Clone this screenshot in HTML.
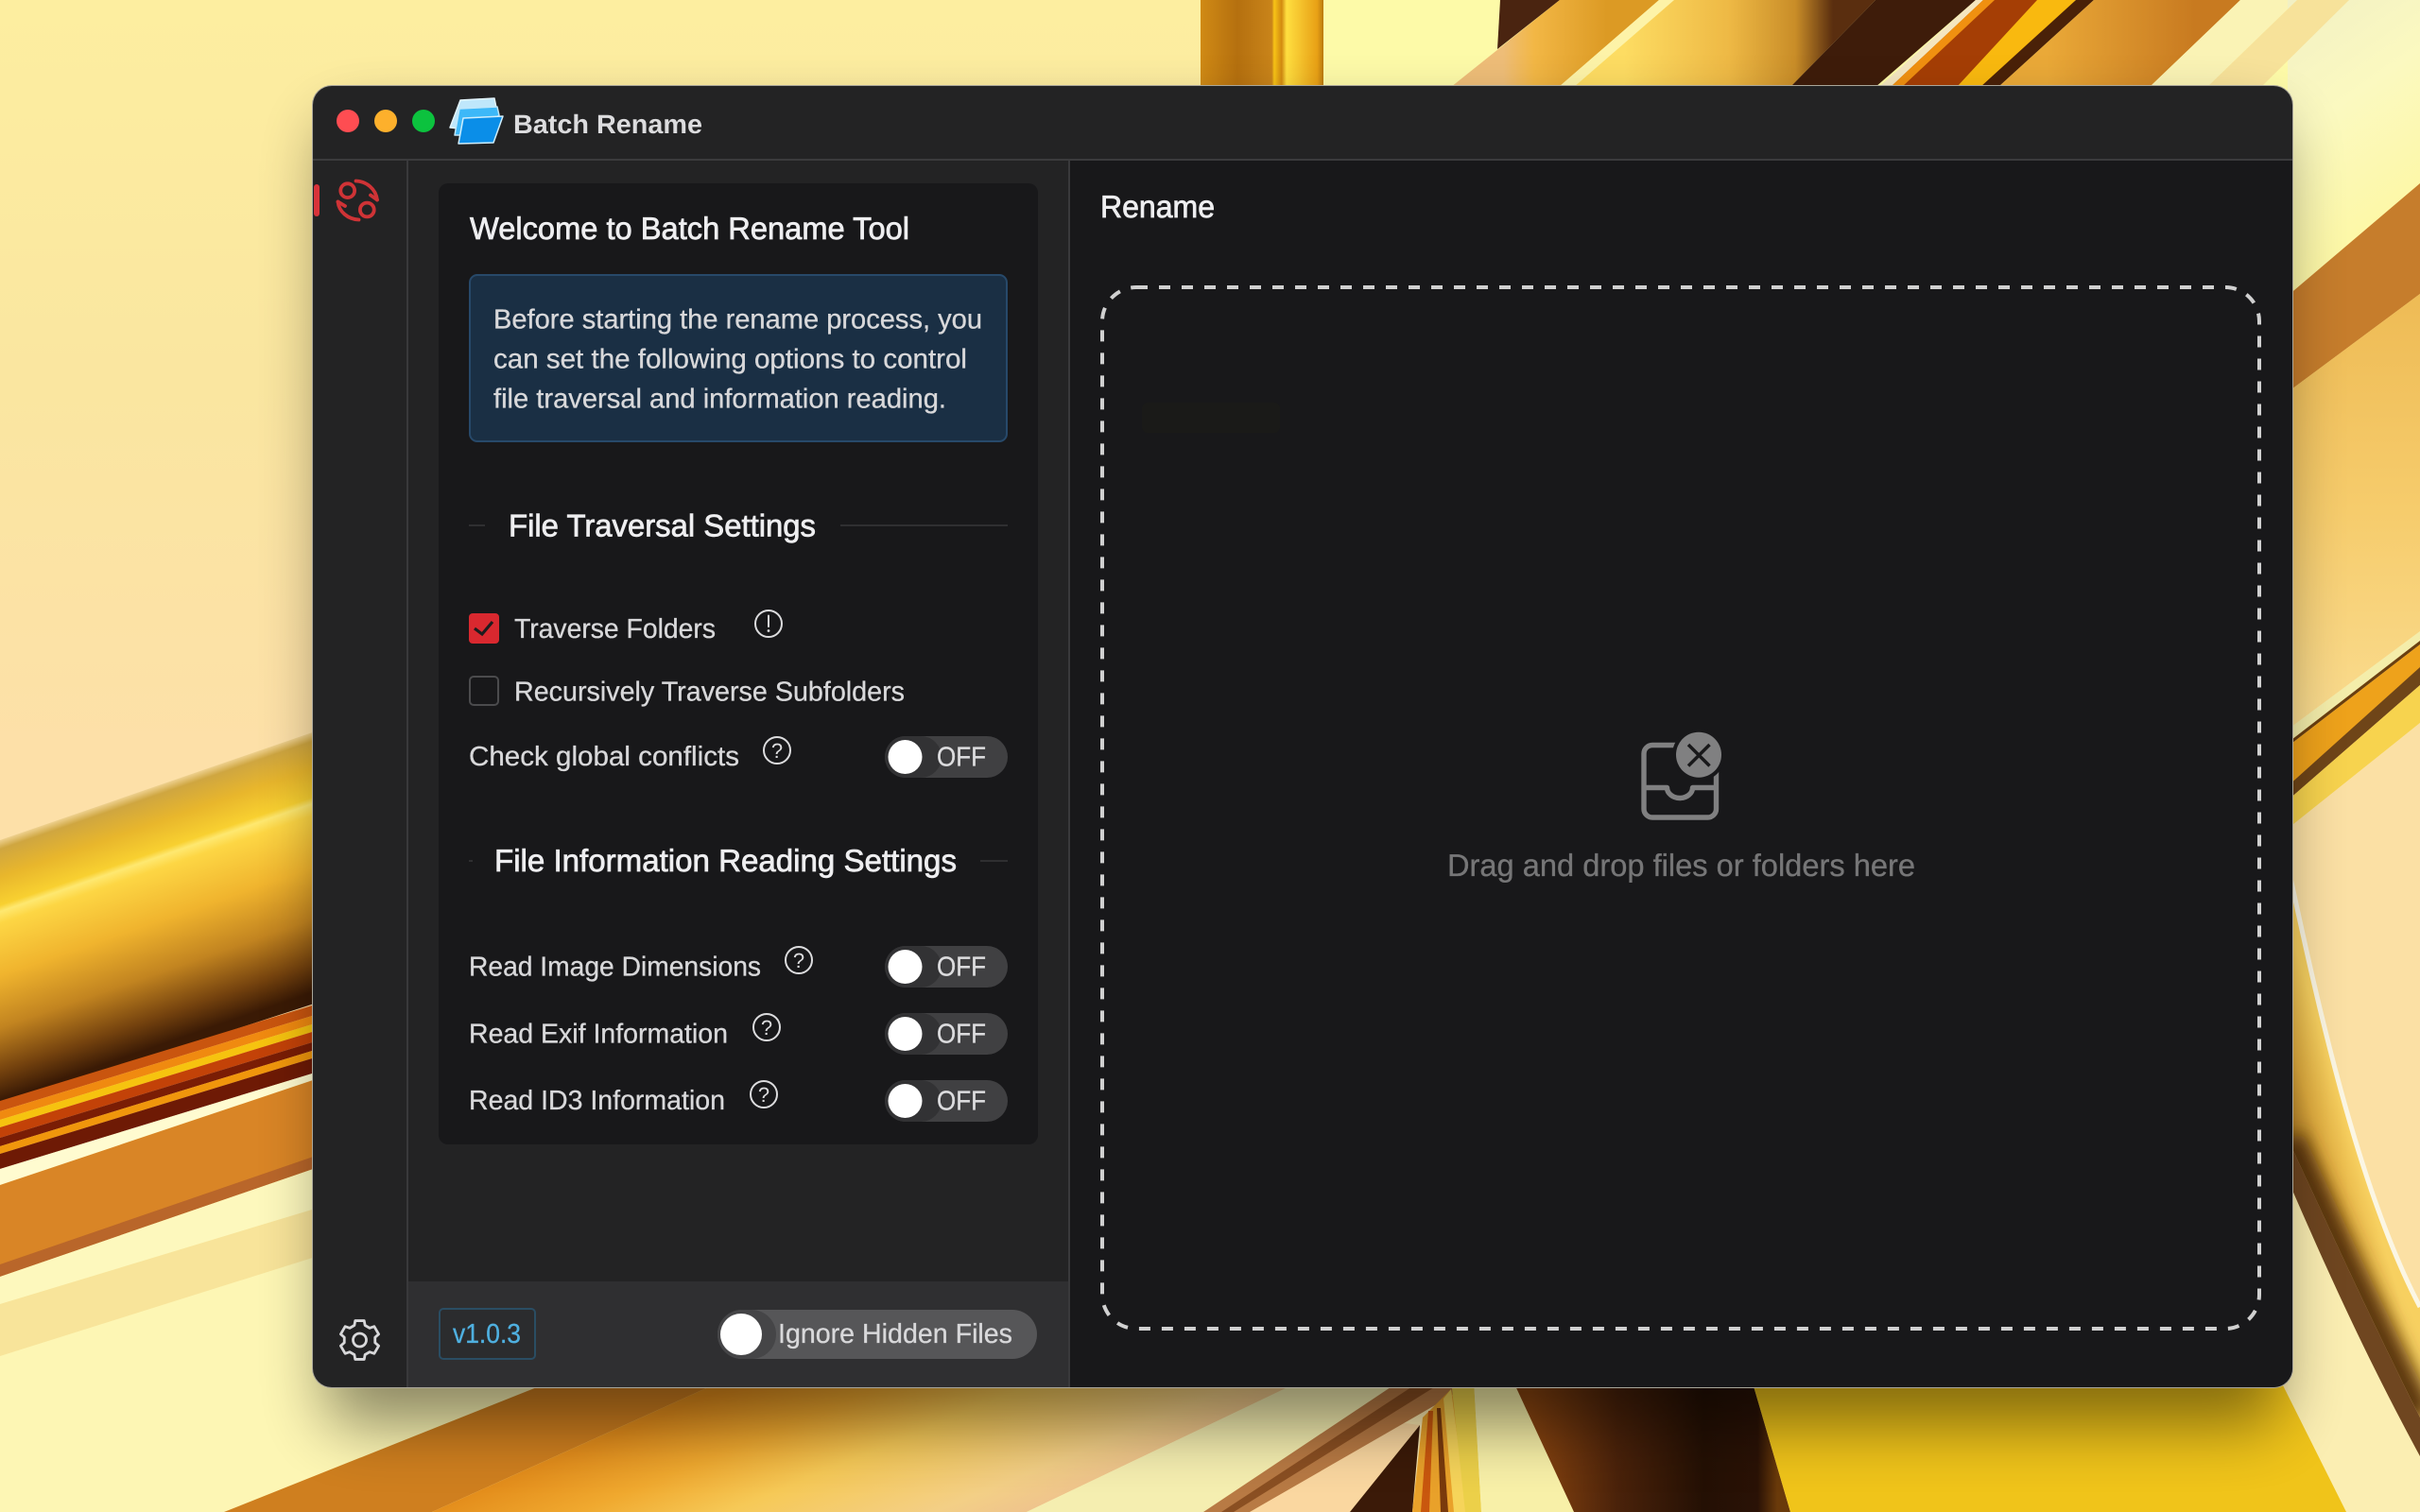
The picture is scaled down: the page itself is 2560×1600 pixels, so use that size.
<!DOCTYPE html>
<html lang="en">
<head>
<meta charset="utf-8">
<title>Batch Rename</title>
<style>
html,body{margin:0;padding:0;width:2560px;height:1600px;overflow:hidden;background:#fbe6a2}
svg{display:block;position:absolute;left:0;top:0}
text{font-family:"Liberation Sans",Arial,sans-serif;text-rendering:geometricPrecision}
.b{font-size:29px;fill:#d8d8da;stroke:#d8d8da;stroke-width:.3px}
.h{font-size:33px;fill:#eeeef0;stroke:#eeeef0;stroke-width:.75px}
.off{font-size:29px;fill:#dcdcde;stroke:#dcdcde;stroke-width:.3px}
.ic{fill:none;stroke:#dcdcde;stroke-width:2}
.icon-t{font-size:22px;fill:#dcdcde;text-anchor:middle}
</style>
</head>
<body>
<svg width="2560" height="1600" viewBox="0 0 2560 1600" xmlns="http://www.w3.org/2000/svg">
<defs>
<linearGradient id="base" x1="0" y1="0" x2="0" y2="1">
<stop offset="0" stop-color="#fdeea0"/><stop offset=".25" stop-color="#fae6a0"/><stop offset=".5" stop-color="#fde0a8"/><stop offset="1" stop-color="#fde0a8"/>
</linearGradient>
<linearGradient id="lb" gradientUnits="userSpaceOnUse" x1="0" y1="889" x2="85" y2="1135">
<stop offset="0" stop-color="#eed08e"/><stop offset=".035" stop-color="#cfa640"/><stop offset=".14" stop-color="#e8b62c"/><stop offset=".25" stop-color="#f8d030"/><stop offset=".275" stop-color="#fee870"/><stop offset=".32" stop-color="#fdd644"/><stop offset=".52" stop-color="#f0b42e"/><stop offset=".72" stop-color="#c28420"/><stop offset=".89" stop-color="#74420e"/><stop offset="1" stop-color="#3a1a05"/>
</linearGradient>
<linearGradient id="vg" gradientUnits="userSpaceOnUse" x1="1270" y1="0" x2="1400" y2="0">
<stop offset="0" stop-color="#d08a15"/><stop offset=".3" stop-color="#b5700f"/><stop offset=".58" stop-color="#c9841a"/><stop offset=".6" stop-color="#f8c416"/><stop offset=".66" stop-color="#d28a10"/><stop offset=".7" stop-color="#ffdf40"/><stop offset=".95" stop-color="#e8a015"/><stop offset="1" stop-color="#b8780e"/>
</linearGradient>
<linearGradient id="g1" gradientUnits="userSpaceOnUse" x1="1590" y1="46" x2="1700" y2="46">
<stop offset="0" stop-color="#eebd78"/><stop offset=".3" stop-color="#f2b745"/><stop offset="1" stop-color="#dc9a24"/>
</linearGradient>
<linearGradient id="g2" gradientUnits="userSpaceOnUse" x1="1718" y1="46" x2="1939" y2="46">
<stop offset="0" stop-color="#fddc62"/><stop offset=".5" stop-color="#eeb945"/><stop offset=".82" stop-color="#c98d28"/><stop offset="1" stop-color="#5a2e0f"/>
</linearGradient>
<linearGradient id="g3" gradientUnits="userSpaceOnUse" x1="2165" y1="46" x2="2322" y2="46">
<stop offset="0" stop-color="#eaa938"/><stop offset="1" stop-color="#c87a20"/>
</linearGradient>
<linearGradient id="rc" gradientUnits="userSpaceOnUse" x1="2420" y1="0" x2="2560" y2="200">
<stop offset="0" stop-color="#f2f0c4"/><stop offset=".5" stop-color="#fbf9c0"/><stop offset="1" stop-color="#fdf8a8"/>
</linearGradient>
<linearGradient id="rg" x1="0" y1="0" x2="0" y2="1">
<stop offset="0" stop-color="#eebb55"/><stop offset=".5" stop-color="#f6cc6c"/><stop offset="1" stop-color="#fadc90"/>
</linearGradient>
<linearGradient id="rcurve" gradientUnits="userSpaceOnUse" x1="2487" y1="1200" x2="2423" y2="1219">
<stop offset="0" stop-color="#f7d060"/><stop offset=".5" stop-color="#e2ae40"/><stop offset="1" stop-color="#a8741f"/>
</linearGradient>
<linearGradient id="bgold" gradientUnits="userSpaceOnUse" x1="457" y1="1600" x2="551" y2="1824">
<stop offset="0" stop-color="#e48e1c"/><stop offset=".25" stop-color="#f0a92f"/><stop offset=".5" stop-color="#f6c957"/><stop offset=".85" stop-color="#f3cf86"/><stop offset="1" stop-color="#efc48c"/>
</linearGradient>
<linearGradient id="bdark" gradientUnits="userSpaceOnUse" x1="1620" y1="0" x2="1880" y2="0">
<stop offset="0" stop-color="#8a4510"/><stop offset=".35" stop-color="#4a220a"/><stop offset=".7" stop-color="#241004"/><stop offset=".92" stop-color="#2a1206"/><stop offset="1" stop-color="#6a3a0a"/>
</linearGradient>
<filter id="blur" x="-20%" y="-20%" width="140%" height="140%"><feGaussianBlur stdDeviation="34"/></filter>
<filter id="soft2" x="-50%" y="-20%" width="200%" height="140%"><feGaussianBlur stdDeviation="9"/></filter>
<clipPath id="win"><rect x="331" y="91" width="2094" height="1377" rx="20"/></clipPath>
<clipPath id="goldclip"><path d="M2420 915C2445 1030 2490 1250 2560 1383L2560 1500C2500 1380 2460 1290 2420 1205Z"/></clipPath>
</defs>

<!-- wallpaper -->
<rect width="2560" height="1600" fill="url(#base)"/>

<!-- lower-left cream -->
<polygon points="0,1240 400,1100 1400,1100 1400,1600 0,1600" fill="#fdf6b4"/>
<!-- left gold band -->
<polygon points="0,889 400,751 400,1040 0,1170" fill="url(#lb)"/>
<polygon points="0,1165 340,1061 340,1072 0,1176" fill="#c9550f"/>
<polygon points="0,1176 340,1072 340,1081 0,1185" fill="#f08a10"/>
<polygon points="0,1185 340,1081 340,1089 0,1193" fill="#f6c30f"/>
<polygon points="0,1193 340,1089 340,1100 0,1204" fill="#c34208"/>
<polygon points="0,1204 340,1100 340,1109 0,1213" fill="#7a1d05"/>
<polygon points="0,1213 340,1109 340,1117 0,1221" fill="#f0960c"/>
<polygon points="0,1221 340,1117 340,1133 0,1237" fill="#6e1a05"/>
<polygon points="0,1237 340,1133 340,1140 0,1254" fill="#fffbd0"/>
<polygon points="0,1254 340,1140 340,1234 0,1351" fill="#d98526"/>
<polygon points="0,1338 340,1221 340,1234 0,1351" fill="#b9662a"/>
<polygon points="0,1351 340,1234 340,1277 0,1380" fill="#fdf8bd"/>
<polygon points="0,1380 340,1277 340,1328 0,1435" fill="#f8e49a"/>

<!-- top strip -->
<rect x="1400" y="0" width="1160" height="100" fill="#fdfaa8"/>
<rect x="1270" y="0" width="130" height="100" fill="url(#vg)"/>
<polygon points="1587,0 1650,0 1584,52" fill="#4a2410"/>
<polygon points="1650,0 1755,0 1649,92 1535,92" fill="url(#g1)"/>
<polygon points="1755,0 1771,0 1665,92 1649,92" fill="#fdf3a8"/>
<polygon points="1771,0 1984,0 1894,92 1665,92" fill="url(#g2)"/>
<polygon points="1984,0 2090,0 1984,92 1894,92" fill="#3e1c0a"/>
<polygon points="2090,0 2098,0 2000,92 1988,92" fill="#f4e6c0"/>
<polygon points="2098,0 2180,0 2082,92 2000,92" fill="#a53e05"/>
<polygon points="2098,0 2110,0 2012,92 2000,92" fill="#f09010"/>
<polygon points="2155,0 2196,0 2105,92 2070,92" fill="#f9b90f"/>
<polygon points="2196,0 2215,0 2114,92 2095,92" fill="#4a2108"/>
<polygon points="2215,0 2370,0 2274,92 2114,92" fill="url(#g3)"/>
<polygon points="2370,0 2430,0 2335,92 2274,92" fill="#faf3b5"/>

<!-- right side -->
<rect x="2420" y="0" width="140" height="320" fill="url(#rc)"/>
<polygon points="2430,0 2485,0 2392,92 2335,92" fill="#f7e29a"/>
<polygon points="2420,313 2560,194 2560,311 2420,415" fill="#c67d2c"/>
<polygon points="2420,415 2560,311 2560,668 2420,772" fill="url(#rg)"/>
<polygon points="2420,772 2560,668 2560,678 2420,786" fill="#f4edaa"/>
<polygon points="2420,786 2560,678 2560,682 2420,790" fill="#6a3f10"/>
<polygon points="2420,790 2560,682 2560,720 2420,832" fill="#eea21b"/>
<polygon points="2420,832 2560,706 2560,725 2420,847" fill="#6f4518"/>
<polygon points="2420,847 2560,725 2560,765 2420,877" fill="#f7d34e"/>
<polygon points="2420,877 2560,765 2560,1600 2420,1600" fill="#fbe0a4"/>
<path d="M2420 915C2445 1030 2490 1250 2560 1383L2560 1600L2420 1600Z" fill="#fbeeb2"/>
<path d="M2420 915C2445 1030 2490 1250 2560 1383L2560 1500C2500 1380 2460 1290 2420 1205Z" fill="url(#rcurve)"/>
<g clip-path="url(#goldclip)">
<path d="M2420 1205C2460 1290 2500 1380 2560 1500" fill="none" stroke="#5a3510" stroke-width="34" filter="url(#soft2)"/>
</g>
<path d="M2420 1205C2460 1290 2500 1380 2560 1500L2560 1541C2500 1430 2460 1340 2420 1248Z" fill="#6f4620"/>
<path d="M2420 915C2445 1030 2490 1250 2560 1383" fill="none" stroke="#fbf6e4" stroke-width="5"/>

<!-- bottom strip -->
<rect x="1400" y="1440" width="1020" height="160" fill="#fbe9b0"/>
<polygon points="588,1460 767,1460 457,1600 237,1600" fill="#cf7f1f"/>
<polygon points="767,1460 1379,1460 1086,1600 457,1600" fill="url(#bgold)"/>
<polygon points="1379,1460 1483,1460 1273,1600 1086,1600" fill="#f5eeb0"/>
<polygon points="1322,1600 1428,1600 1502,1508 1440,1500" fill="#fad7a0"/>
<polygon points="1428,1600 1494,1600 1502,1508" fill="#3b1a08"/>
<polygon points="1483,1460 1565,1460 1322,1600 1273,1600" fill="#b87a44"/>
<polygon points="1505,1460 1530,1460 1305,1600 1292,1600" fill="#8a4f22"/>
<polygon points="1505,1500 1535,1470 1567,1600 1494,1600" fill="#e9a12a"/>
<polygon points="1511,1493 1516,1493 1512,1600 1503,1600" fill="#c9570e"/>
<polygon points="1520,1490 1524,1490 1532,1600 1524,1600" fill="#7a3a0c"/>
<polygon points="1527,1480 1535,1470 1552,1600 1538,1600" fill="#f6d45a"/>
<polygon points="1535,1460 1559,1460 1567,1600 1550,1600" fill="#ecd049"/>
<polygon points="1559,1460 1600,1460 1665,1600 1567,1600" fill="#f8f0a8"/>
<polygon points="1600,1460 1853,1460 1894,1600 1665,1600" fill="url(#bdark)"/>
<polygon points="1853,1460 2412,1460 2482,1600 1894,1600" fill="#f0c41a"/>

<!-- window shadow -->
<rect x="345" y="130" width="2066" height="1378" rx="24" fill="#000" opacity=".45" filter="url(#blur)"/>

<!-- window -->
<rect x="330" y="90" width="2096" height="1379" rx="21" fill="#a9a69a"/>
<g clip-path="url(#win)">
<rect x="331" y="91" width="2094" height="1377" fill="#232324"/>
<rect x="1132" y="170" width="1293" height="1298" fill="#18181a"/>
<rect x="331" y="168" width="2094" height="2" fill="#3b3b3d"/>
<rect x="430" y="170" width="2" height="1298" fill="#39393b"/>
<rect x="1130" y="170" width="2" height="1298" fill="#39393b"/>
<rect x="432" y="1356" width="698" height="112" fill="#2f2f31"/>

<!-- traffic lights -->
<circle cx="368" cy="128" r="12" fill="#fe4d52"/>
<circle cx="408" cy="128" r="12" fill="#fdb02c"/>
<circle cx="448" cy="128" r="12" fill="#0cc23e"/>

<!-- logo -->
<polygon points="487,106 523,104 525,114 496,137 476,135" fill="#bfe7fb" stroke="#e4f5fd" stroke-width="1.5" stroke-linejoin="round"/>
<polygon points="486,115 526,113 528,122 503,143 481,143" fill="#3db8f8" stroke="#bfe7fb" stroke-width="1.5" stroke-linejoin="round"/>
<polygon points="490,125 532,123 522,151 485,152" fill="#0a8ee8" stroke="#cfeefc" stroke-width="1.5" stroke-linejoin="round"/>

<text x="543" y="141" font-size="28" font-weight="700" fill="#dcdcde" textLength="200" lengthAdjust="spacingAndGlyphs">Batch Rename</text>

<!-- sidebar -->
<rect x="332" y="195" width="6" height="34" rx="3" fill="#d9333a"/>
<g fill="none" stroke="#cf3336" stroke-width="3.8" stroke-linecap="round" stroke-linejoin="round">
<circle cx="367.7" cy="201.7" r="7.4"/>
<circle cx="388.3" cy="222" r="7.4"/>
<path d="M376.5 191.5C388 192 397.5 200 399 211.5"/>
<path d="M392 206.5L399 211.5"/>
<path d="M379.5 232.5C368 232 358.5 224 357.5 213.5"/>
<path d="M365 218L357.5 213.5"/>
</g>
<g transform="translate(380.5 1418)" fill="none" stroke="#d8d8da" stroke-width="2.8" stroke-linejoin="round">
<polygon points="-4.72,-20.46 4.72,-20.46 5.64,-15.5 10.6,-12.64 15.36,-14.32 20.08,-6.14 16.25,-2.87 16.25,2.87 20.08,6.14 15.36,14.32 10.6,12.64 5.64,15.5 4.72,20.46 -4.72,20.46 -5.64,15.5 -10.6,12.64 -15.36,14.32 -20.08,6.14 -16.25,2.87 -16.25,-2.87 -20.08,-6.14 -15.36,-14.32 -10.6,-12.64 -5.64,-15.5"/>
<circle r="7"/>
</g>

<!-- card -->
<rect x="464" y="194" width="634" height="1017" rx="10" fill="#18181a"/>
<text x="497" y="253" class="h" textLength="465" lengthAdjust="spacingAndGlyphs">Welcome to Batch Rename Tool</text>

<rect x="497" y="291" width="568" height="176" rx="8" fill="#1a2f44" stroke="#27496a" stroke-width="2"/>
<text x="522" y="347.5" class="b" textLength="517" lengthAdjust="spacingAndGlyphs">Before starting the rename process, you</text>
<text x="522" y="389.5" class="b" textLength="501" lengthAdjust="spacingAndGlyphs">can set the following options to control</text>
<text x="522" y="431.5" class="b" textLength="479" lengthAdjust="spacingAndGlyphs">file traversal and information reading.</text>

<rect x="496" y="555" width="17" height="2" fill="#2f2f31"/>
<rect x="889" y="555" width="177" height="2" fill="#2f2f31"/>
<text x="538" y="567.5" class="h" textLength="325" lengthAdjust="spacingAndGlyphs">File Traversal Settings</text>

<rect x="496" y="649" width="32" height="32" rx="4" fill="#d9282f"/>
<path d="M502 665L510 671L521 658" fill="none" stroke="#1c1c1e" stroke-width="3.2"/>
<text x="544" y="675" class="b" textLength="213" lengthAdjust="spacingAndGlyphs">Traverse Folders</text>
<circle cx="813" cy="660" r="14" class="ic"/>
<path d="M813 651.5V663" stroke="#dcdcde" stroke-width="2" stroke-linecap="round"/>
<circle cx="813" cy="667.5" r="1.4" fill="#dcdcde"/>

<rect x="497" y="716" width="30" height="30" rx="4" fill="none" stroke="#4b4b4d" stroke-width="2"/>
<text x="544" y="741.5" class="b" textLength="413" lengthAdjust="spacingAndGlyphs">Recursively Traverse Subfolders</text>

<text x="496" y="810" class="b" textLength="286" lengthAdjust="spacingAndGlyphs">Check global conflicts</text>
<circle cx="822" cy="794" r="14" class="ic"/>
<text x="822" y="802" class="icon-t">?</text>
<rect x="936" y="779" width="130" height="44" rx="22" fill="#404042"/>
<rect x="936" y="779" width="60" height="44" rx="22" fill="#323234"/>
<circle cx="957.5" cy="801" r="18" fill="#fff"/>
<text x="991" y="810.5" class="off" textLength="52" lengthAdjust="spacingAndGlyphs">OFF</text>

<rect x="496" y="910" width="4" height="2" fill="#2f2f31"/>
<rect x="1037" y="910" width="29" height="2" fill="#2f2f31"/>
<text x="523" y="922" class="h" textLength="489" lengthAdjust="spacingAndGlyphs">File Information Reading Settings</text>

<text x="496" y="1032.5" class="b" textLength="309" lengthAdjust="spacingAndGlyphs">Read Image Dimensions</text>
<circle cx="845" cy="1016" r="14" class="ic"/>
<text x="845" y="1024" class="icon-t">?</text>
<rect x="936" y="1001" width="130" height="44" rx="22" fill="#404042"/>
<rect x="936" y="1001" width="60" height="44" rx="22" fill="#323234"/>
<circle cx="957.5" cy="1023" r="18" fill="#fff"/>
<text x="991" y="1032.5" class="off" textLength="52" lengthAdjust="spacingAndGlyphs">OFF</text>

<text x="496" y="1103.5" class="b" textLength="274" lengthAdjust="spacingAndGlyphs">Read Exif Information</text>
<circle cx="811" cy="1087" r="14" class="ic"/>
<text x="811" y="1095" class="icon-t">?</text>
<rect x="936" y="1072" width="130" height="44" rx="22" fill="#404042"/>
<rect x="936" y="1072" width="60" height="44" rx="22" fill="#323234"/>
<circle cx="957.5" cy="1094" r="18" fill="#fff"/>
<text x="991" y="1103.5" class="off" textLength="52" lengthAdjust="spacingAndGlyphs">OFF</text>

<text x="496" y="1174" class="b" textLength="271" lengthAdjust="spacingAndGlyphs">Read ID3 Information</text>
<circle cx="808" cy="1158" r="14" class="ic"/>
<text x="808" y="1166" class="icon-t">?</text>
<rect x="936" y="1143" width="130" height="44" rx="22" fill="#404042"/>
<rect x="936" y="1143" width="60" height="44" rx="22" fill="#323234"/>
<circle cx="957.5" cy="1165" r="18" fill="#fff"/>
<text x="991" y="1174.5" class="off" textLength="52" lengthAdjust="spacingAndGlyphs">OFF</text>

<!-- footer -->
<rect x="465" y="1385" width="101" height="53" rx="4" fill="#2b2c2e" stroke="#2a4d63" stroke-width="2"/>
<text x="479" y="1421" font-size="29" fill="#4fb0e0" stroke="#4fb0e0" stroke-width=".3" textLength="72" lengthAdjust="spacingAndGlyphs">v1.0.3</text>
<rect x="759" y="1386" width="338" height="52" rx="26" fill="#565658"/>
<rect x="759" y="1386" width="62" height="52" rx="26" fill="#454547"/>
<circle cx="784" cy="1412" r="22" fill="#fff"/>
<text x="823" y="1421" class="b" textLength="248" lengthAdjust="spacingAndGlyphs">Ignore Hidden Files</text>

<!-- right panel -->
<text x="1164" y="230" class="h" textLength="121" lengthAdjust="spacingAndGlyphs">Rename</text>
<rect x="1208" y="426" width="146" height="32" rx="6" fill="#1a1a18"/>
<rect x="1166" y="304" width="1224" height="1102" rx="36" fill="none" stroke="#d0d0d0" stroke-width="4" stroke-dasharray="12 12"/>

<g fill="none" stroke="#808081" stroke-width="5.4" stroke-linejoin="round">
<rect x="1739" y="788.5" width="76.5" height="76.5" rx="9"/>
<path d="M1739 833.5H1763.5A13.5 11 0 0 0 1790.5 833.5H1815.5"/>
</g>
<circle cx="1797" cy="798.7" r="28" fill="#18181a"/>
<circle cx="1797" cy="798.7" r="24" fill="#808081"/>
<path d="M1786 788L1808.5 810.5M1808.5 788L1786 810.5" stroke="#18181a" stroke-width="3.5" fill="none"/>
<text x="1531" y="927" font-size="33" fill="#767677" stroke="#767677" stroke-width=".35" textLength="495" lengthAdjust="spacingAndGlyphs">Drag and drop files or folders here</text>
</g>
</svg>
</body>
</html>
